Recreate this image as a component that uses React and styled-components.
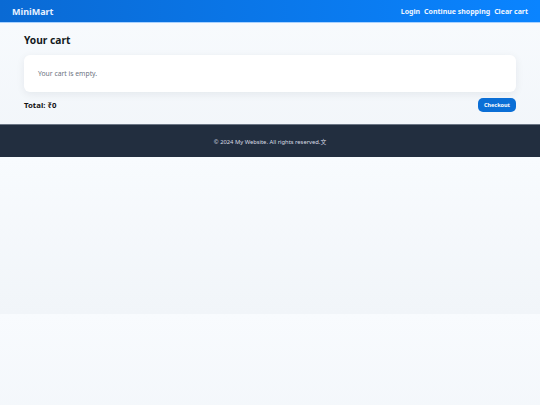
import React from 'react'
import styled, { createGlobalStyle } from 'styled-components'

const GlobalStyle = createGlobalStyle`
	body {
		margin: 0;
		font-family: 'Noto Sans', 'Noto Sans CJK SC', sans-serif;
		background: linear-gradient(180deg, #f8fbfe 0%, #f1f5f9 100%);
		color: #111827;
	}
`

const Header = styled.header`
	display: flex;
	align-items: center;
	justify-content: space-between;
	height: 22px;
	padding: 0 12px;
	background: linear-gradient(90deg, #0a6ad4 0%, #0a84ff 100%);
	border-bottom: 1px solid #a9d2ff;
`

const Brand = styled.div`
	font-size: 9px;
	font-weight: 700;
	color: #e8f1ff;
`

const Nav = styled.nav`
	display: flex;
	gap: 4px;
`

const NavLink = styled.a`
	font-size: 7px;
	font-weight: 700;
	color: #eef5ff;
	text-decoration: none;
	cursor: pointer;
`

const Main = styled.main`
	padding: 10px 24px 12px;
`

const Title = styled.h1`
	margin: 0 0 8px;
	font-size: 10.2px;
	font-weight: 700;
	color: #141a22;
`

const Card = styled.div`
	background: #fff;
	border-radius: 6px;
	box-shadow: 0 2px 8px rgba(15, 23, 42, 0.07);
	padding: 14px 14px;
	font-size: 6.8px;
	color: #6b7280;
`

const TotalRow = styled.div`
	display: flex;
	align-items: center;
	justify-content: space-between;
	margin-top: 6px;
`

const Total = styled.div`
	font-size: 7.8px;
	font-weight: 700;
	color: #111;
`

const Button = styled.button`
	border: none;
	background: #0b6fd6;
	color: #fff;
	font-family: inherit;
	font-size: 5.5px;
	font-weight: 700;
	height: 14px;
	padding: 0 6px;
	border-radius: 5px;
	cursor: pointer;
`

const Footer = styled.footer`
	background: #222e3f;
	border-top: 1px solid #6b7685;
	height: 32px;
	display: flex;
	align-items: center;
	justify-content: center;
	font-size: 5.8px;
	color: #d8dde4;
`

export default function App() {
	const links = ['Login', 'Continue shopping', 'Clear cart']
	return (
		<>
			<GlobalStyle />
			<Header>
				<Brand>MiniMart</Brand>
				<Nav>
					{links.map((name) => (
						<NavLink key={name}>{name}</NavLink>
					))}
				</Nav>
			</Header>
			<Main>
				<Title>Your cart</Title>
				<Card>Your cart is empty.</Card>
				<TotalRow>
					<Total>Total: ₹0</Total>
					<Button>Checkout</Button>
				</TotalRow>
			</Main>
			<Footer>© 2024 My Website. All rights reserved.文</Footer>
		</>
	)
}
